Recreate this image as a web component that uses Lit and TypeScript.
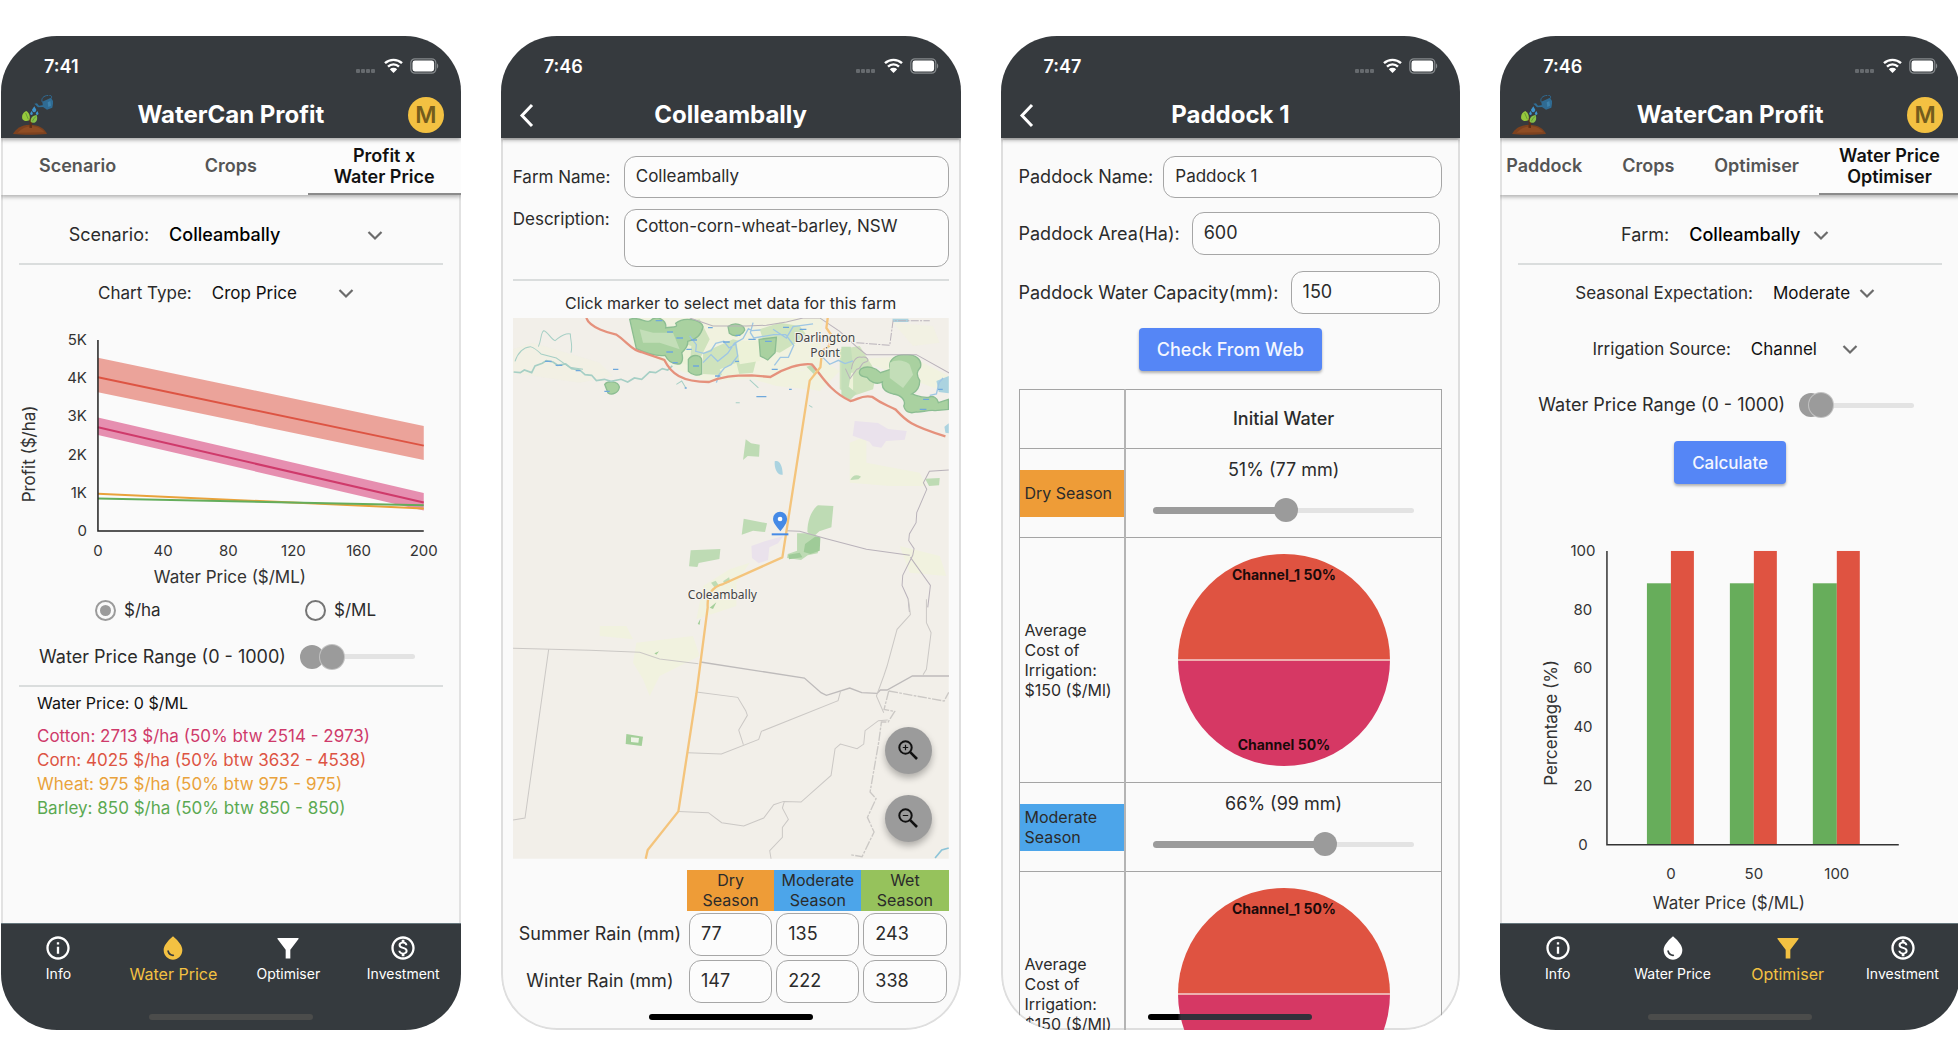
import { LitElement, html, svg, css, TemplateResult } from "lit";
import { customElement, property } from "lit/decorators.js";
import { classMap } from "lit/directives/class-map.js";

const base = css`
  *, *::before, *::after { box-sizing: border-box; }
  :host { display: block; font-family: Inter, "Liberation Sans", sans-serif; color: #2b2b2b; }
  svg { display: block; }
  button, input, select, textarea { font: inherit; color: inherit; margin: 0; }
  button { border: 0; background: none; padding: 0; cursor: pointer; }
  .body { padding: 0 18px; font-size: 17px; line-height: 20px; }
  .divider { border: 0; height: 2px; margin: 0; background: #dadddd; }
  .row { display: flex; align-items: center; justify-content: center; gap: 20px; height: 56px; }
  .action {
    display: block; height: 43px; padding: 0 18px; border-radius: 4px; background: #5586f6;
    color: #f3f6ff; font-weight: 500; box-shadow: 0 2px 3px rgba(0, 0, 0, .3);
  }
  .field {
    width: 100%; min-width: 0; height: 42px; padding: 0 11px 2px; background: #fcfcfc;
    border: 1px solid #a6a6a6; border-radius: 12px; outline: 0; resize: none; display: block;
  }
`;

/* ---------- drop-down ---------- */
@customElement("pick-row")
class PickRow extends LitElement {
  @property() label = "";
  @property() value = "";
  @property({ type: Boolean }) strong = false;
  @property({ type: Number }) room = 150;
  static styles = [base, css`
    .pick { display: grid; grid-template-columns: 1fr 24px 6px; align-items: center; }
    .pick select {
      grid-area: 1 / 1 / 2 / 4; width: 100%; height: 32px; appearance: none; border: 0; outline: 0;
      background: transparent; padding: 0; color: #111;
    }
    .pick svg { grid-area: 1 / 2 / 2 / 3; pointer-events: none; }
    .row { font-size: 17px; }
    .strong { font-size: 18px; }
    .strong select { font-weight: 500; color: #000; }
  `];
  render() {
    return html`<div class=${classMap({ row: true, strong: this.strong })}>
      <label for="s">${this.label}</label>
      <div class="pick" style="width:${this.room}px">
        <select id="s"><option>${this.value}</option></select>
        <svg width="24" height="24" viewBox="0 0 24 24" fill="none" stroke="#6b6b6b" stroke-width="2.200"><path d="M5.500 9 12 15.500 18.500 9"/></svg>
      </div>
    </div>`;
  }
}

/* ---------- sliders ---------- */
@customElement("value-slider")
class ValueSlider extends LitElement {
  @property() label = "";
  @property({ type: Number }) max = 100;
  @property({ type: Number }) value = 0;
  @property({ type: Number }) from = -1;
  static styles = [base, css`
    .slider { display: grid; align-items: center; height: 24px; }
    .slider > * { grid-area: 1 / 1; min-width: 0; }
    .rail { height: 5px; border-radius: 3px; margin: 0 12px; background: #e3e3e3; }
    .track { margin: 0 12px; }
    .fill { height: 7px; border-radius: 4px; background: #9b9b9b; }
    input { width: 100%; height: 24px; appearance: none; background: transparent; pointer-events: none; outline: 0; }
    input::-webkit-slider-thumb {
      appearance: none; width: 24px; height: 24px; border-radius: 50%; background: #9b9b9b; pointer-events: auto;
    }
    .upper::-webkit-slider-thumb { box-shadow: 0 0 0 1px #c2c2c2; }
  `];
  render() {
    const two = this.from >= 0;
    const pct = (this.value / this.max) * 100;
    return html`<div class="slider">
      <div class="rail"></div>
      <div class="track"><div class="fill" style="width:${pct}%"></div></div>
      ${two ? html`<input type="range" aria-label="${this.label}, lowest" min="0" max=${this.max} .value=${String(this.from)}>` : ""}
      <input class=${two ? "upper" : ""} type="range" aria-label=${this.label} min="0" max=${this.max} .value=${String(this.value)}>
    </div>`;
  }
}

@customElement("price-range")
class PriceRange extends LitElement {
  @property({ type: Number }) value = 0;
  static styles = [base, css`
    .row { gap: 14px; justify-content: flex-start; padding-left: 20px; font-size: 18px; white-space: nowrap; }
    value-slider { width: 127px; }
  `];
  render() {
    return html`<div class="row"><span>Water Price Range (0 - 1000)</span>
      <value-slider label="Water price" max="1000" from="0" .value=${this.value}></value-slider></div>`;
  }
}

/* ---------- phone frame ---------- */
const backIcon = svg`<path d="M15 4 5 14.500 15 25" fill="none" stroke="#fff" stroke-width="3"/>`;

const plantLogo = html`<svg width="40" height="40" viewBox="0 0 120 120" aria-hidden="true">
  <path d="M0 117c8-16 24-27 50-28 28 0 46 12 52 28-30 3-76 3-102 0z" fill="#7d421f"/>
  <path d="M14 113c12-12 24-18 40-19 20 0 32 8 40 18z" fill="#8f4d24"/>
  <path d="M49 98c2-12 1-20-3-30l6 2 5 8 4-4c-4 9-5 16-4 25z" fill="#5b2f1a"/>
  <path d="M28 72c-3-12 3-20 12-24 9 6 13 16 9 28-9 4-17 2-21-4z" fill="#97c93d"/>
  <path d="M53 80c-1-12 6-18 18-20 3 10 2 17-4 22-5 3-11 1-14-2z" fill="#86c04a"/>
  <path d="M38 54c3 7 5 12 8 19M69 64c-5 5-8 9-11 15" stroke="#4e8a2c" stroke-width="2" fill="none"/>
  <path d="M64 26l8-1 6 7 14-2 1 6-18 1z" fill="#2f6e96"/>
  <path d="M88 20l26-12 7 12-3 18-16 6-12-8z" fill="#2f6b93"/>
  <path d="M88 22c-5-12 4-20 18-21M114 10c4-4 2-9-5-9" stroke="#2f6b93" stroke-width="3" fill="none"/>
  <path d="M104 22l8-4 2 14-8 4z" fill="#3d82ad"/>
  <g fill="#3f93cc"><path d="M64 34l5 9a6 6 0 1 1-11 0z"/><path d="M56 48l3 6a4 4 0 1 1-7 0z"/><path d="M73 48l3 6a4 4 0 1 1-7 0z"/></g>
</svg>`;

@customElement("phone-head")
class PhoneHead extends LitElement {
  @property() time = "";
  @property() heading = "";
  @property({ type: Boolean }) back = false;
  static styles = [base, css`
    :host { position: relative; z-index: 2; background: #363a3e; color: #fff; box-shadow: 0 2px 4px rgba(0, 0, 0, .35); }
    .status { display: flex; align-items: center; justify-content: space-between; height: 56px; padding: 4px 22px 0 43px; font-size: 18px; font-weight: 600; }
    .signals { display: flex; align-items: center; gap: 7px; }
    .bar { display: grid; grid-template-columns: 60px 1fr 60px; align-items: center; height: 46px; }
    h1 { margin: 0; text-align: center; font-size: 24px; line-height: 30px; font-weight: 700; }
    .lead { padding-left: 12px; }
    .back { padding-left: 16px; }
    .me { justify-self: end; margin-right: 17px; width: 36px; height: 36px; border-radius: 50%; background: #f3c142; color: #745c1c; font-size: 23px; font-weight: 600; line-height: 36px; }
  `];
  render() {
    return html`
      <div class="status"><span>${this.time}</span>
        <span class="signals">
          <svg width="22" height="16" viewBox="0 0 22 16" fill="#666a6e"><rect x="1" y="11" width="4" height="4" rx="1"/><rect x="6" y="11" width="4" height="4" rx="1"/><rect x="11" y="11" width="4" height="4" rx="1"/><rect x="16" y="11" width="4" height="4" rx="1"/></svg>
          <svg width="19" height="16" viewBox="0 0 19 16"><path d="M1 5.200a12.400 12.400 0 0 1 17 0M4 8.600a8 8 0 0 1 11 0" fill="none" stroke="#fff" stroke-width="2.400"/><path d="M5.800 11.200a5.400 5.400 0 0 1 7.400 0L9.500 15z" fill="#fff"/></svg>
          <svg width="29" height="16" viewBox="0 0 29 16"><rect x=".8" y=".8" width="25" height="14.400" rx="4" fill="none" stroke="#85898c" stroke-width="1.200"/><rect x="2.500" y="2.500" width="21.600" height="11" rx="2.400" fill="#fff"/><path d="M27 5.500c1.600.6 1.600 4.400 0 5z" fill="#85898c"/></svg>
        </span>
      </div>
      <div class="bar">
        ${this.back
          ? html`<button class="back" aria-label="Back"><svg width="22" height="29" viewBox="0 0 22 29">${backIcon}</svg></button>`
          : html`<span class="lead">${plantLogo}</span>`}
        <h1>${this.heading}</h1>
        ${this.back ? "" : html`<button class="me" aria-label="Account">M</button>`}
      </div>`;
  }
}

@customElement("tab-strip")
class TabStrip extends LitElement {
  @property({ attribute: false }) tabs: string[] = [];
  @property({ type: Boolean }) scrolls = false;
  static styles = [base, css`
    :host { position: relative; z-index: 1; background: #fcfcfc; box-shadow: 0 2px 4px rgba(0, 0, 0, .3), inset 2px 0 #e2e2e2; }
    .tabs { display: flex; height: 57px; overflow: hidden; }
    .tabs button { flex: 1; font-size: 18px; line-height: 21px; font-weight: 600; color: #555; white-space: pre-line; text-align: center; border-bottom: 2px solid transparent; }
    .tabs .on { color: #111; border-color: #8b8b8b; }
    .scrolls { justify-content: flex-end; }
    .scrolls button { flex: none; padding: 0 20px; }
  `];
  render() {
    return html`<div role="tablist" class=${classMap({ tabs: true, scrolls: this.scrolls })}>
      ${this.tabs.map((t, i) => html`<button role="tab" class=${i === this.tabs.length - 1 ? "on" : ""}>${t}</button>`)}
    </div>`;
  }
}

const NAV: { name: string; icon: TemplateResult }[] = [
  { name: "Info", icon: svg`<path d="M11 7h2v2h-2zm0 4h2v6h-2zm1-9C6.480 2 2 6.480 2 12s4.480 10 10 10 10-4.480 10-10S17.520 2 12 2zm0 18c-4.410 0-8-3.590-8-8s3.590-8 8-8 8 3.590 8 8-3.590 8-8 8z"/>` },
  { name: "Water Price", icon: svg`<path d="M12 2c-5.330 4.550-8 8.480-8 11.800 0 4.980 3.800 8.200 8 8.200s8-3.220 8-8.200c0-3.320-2.670-7.250-8-11.800zM7.830 14c.37 0 .67.260.74.620.41 2.220 2.280 2.980 3.640 2.870.43-.02.79.32.79.75 0 .4-.32.73-.72.750-2.130.13-4.620-1.090-5.190-4.120A.75.75 0 0 1 7.830 14z"/>` },
  { name: "Optimiser", icon: svg`<path d="M3 3.500h18v.8l-7 9.200V21h-4v-7.500L3 4.300z"/>` },
  { name: "Investment", icon: svg`<path d="M12 2C6.480 2 2 6.480 2 12s4.480 10 10 10 10-4.480 10-10S17.520 2 12 2zm0 18c-4.410 0-8-3.590-8-8s3.590-8 8-8 8 3.590 8 8-3.590 8-8 8zm.31-8.860c-1.770-.45-2.340-.94-2.340-1.670 0-.84.79-1.430 2.100-1.430 1.380 0 1.900.66 1.940 1.640h1.710c-.05-1.340-.87-2.570-2.490-2.970V5H10.900v1.690c-1.510.32-2.720 1.300-2.720 2.810 0 1.790 1.490 2.690 3.660 3.210 1.950.46 2.340 1.150 2.340 1.870 0 .53-.39 1.390-2.100 1.390-1.600 0-2.230-.72-2.320-1.640H8.040c.1 1.700 1.360 2.660 2.860 2.970V19h2.340v-1.670c1.520-.29 2.720-1.160 2.730-2.770-.01-2.200-1.900-2.960-3.660-3.420z"/>` },
];

@customElement("nav-foot")
class NavFoot extends LitElement {
  @property() current = "";
  static styles = [base, css`
    :host { background: #353a3e; color: #fff; border-top: 1px solid #66767c; }
    nav { display: grid; grid-template-columns: repeat(4, 1fr); height: 106px; padding-top: 10px; }
    a { display: grid; justify-items: center; align-content: start; gap: 2px; color: inherit; text-decoration: none; font-size: 14px; line-height: 20px; white-space: nowrap; }
    svg { fill: currentColor; }
    .on { color: #f3c142; font-size: 16px; }
  `];
  render() {
    return html`<nav>${NAV.map((n) => html`<a href="#" class=${n.name === this.current ? "on" : ""}>
      <svg width="28" height="28" viewBox="0 0 24 24">${n.icon}</svg>${n.name}</a>`)}</nav>`;
  }
}

/* ---------- screen: profit against water price ---------- */
const CROPS = [
  { name: "Wheat", color: "#e9a23b", mid: [975, 584], low: [975, 584], high: [975, 584] },
  { name: "Corn", color: "#dd5443", band: "#eba39a", mid: [4025, 2233], low: [3632, 1858], high: [4538, 2748] },
  { name: "Cotton", color: "#cf3a6b", band: "#e68fb0", mid: [2713, 741], low: [2514, 531], high: [2973, 995] },
  { name: "Barley", color: "#64ad5b", mid: [850, 672], low: [850, 672], high: [850, 672] },
];

@customElement("profit-screen")
class ProfitScreen extends LitElement {
  static styles = [base, css`
    .body { padding-top: 12px; }
    .chart { width: 100%; font-size: 15px; fill: #333; }
    .chart .title { font-size: 17px; }
    .inset { margin: 0 -18px; }
    .radios { display: grid; grid-template-columns: 210px 1fr; height: 37px; align-items: center; padding-left: 76px; }
    .radios label { display: flex; align-items: center; gap: 8px; }
    .radios input { appearance: none; width: 21px; height: 21px; border: 2px solid #757575; border-radius: 50%; padding: 3px; background: #fafafa content-box; }
    .radios input:checked { border-color: #9b9b9b; background-color: #9b9b9b; }
    .result { padding: 6px 18px; color: #111; font-size: 16px; }
    ul { list-style: none; margin: 5px 0 0; padding: 0 18px; line-height: 24px; font-size: 17px; white-space: nowrap; }
    .cotton { color: #cf3a6b; } .corn { color: #dd5443; } .wheat { color: #e9a23b; } .barley { color: #5aa952; }
  `];
  render() {
    const x0 = 97, x1 = 423, y = (v: number) => 210 - v * 0.0382;
    const listed = ["Cotton", "Corn", "Wheat", "Barley"].map((n) => CROPS.find((c) => c.name === n)!);
    return html`<div class="body">
      <pick-row strong label="Scenario:" value="Colleambally" room="224"></pick-row>
      <hr class="divider">
      <pick-row label="Chart Type:" value="Crop Price" room="152"></pick-row>
      <div class="inset"><svg class="chart" viewBox="0 0 460 271" role="img" aria-label="Profit by water price">
        ${CROPS.map((c) => c.band ? svg`<path fill=${c.band} d="M${x0} ${y(c.high[0])}L${x1} ${y(c.high[1])}V${y(c.low[1])}L${x0} ${y(c.low[0])}z"/>` : "")}
        ${CROPS.map((c) => svg`<path stroke=${c.color} stroke-width="2" d="M${x0} ${y(c.mid[0])}L${x1} ${y(c.mid[1])}"/>`)}
        <path d="M97 19V210H423" fill="none" stroke="#222" stroke-width="1.500"/>
        ${[0, 1, 2, 3, 4, 5].map((k) => svg`<text x="86" y=${y(k * 1000) + 5} text-anchor="end">${k ? k + "K" : "0"}</text>`)}
        ${[0, 40, 80, 120, 160, 200].map((v) => svg`<text x=${x0 + v * 1.63} y="235" text-anchor="middle">${v}</text>`)}
        <text class="title" x="229" y="262" text-anchor="middle">Water Price ($/ML)</text>
        <text class="title" transform="translate(34 133) rotate(-90)" text-anchor="middle">Profit ($/ha)</text>
      </svg></div>
      <div class="radios">
        <label><input type="radio" name="unit" checked>$/ha</label>
        <label><input type="radio" name="unit">$/ML</label>
      </div>
      <price-range .value=${200}></price-range>
      <hr class="divider">
      <div class="result">Water Price: 0 $/ML</div>
      <ul>${listed.map((c) => html`<li class=${c.name.toLowerCase()}>${c.name}: ${c.mid[0]} $/ha (50% btw ${c.low[0]} - ${c.high[0]})</li>`)}</ul>
    </div>`;
  }
}

/* ---------- screen: farm ---------- */
const farmMap = html`<svg class="map" viewBox="70 26 1307 1622" preserveAspectRatio="xMidYMid slice" role="img" aria-label="Map of Coleambally and Darlington Point">
  <rect x="70" y="26" width="1307" height="1622" fill="#f2efe9"/>
  <g fill="#f1f2df">
    <path d="M640 26H1000l-10 120 60 40-60 60-40-10V180l-110 25-190 10-90-35-130-70L420 26zM1100 150l160-10 117 60V250l-60-20-80-30z"/>
    <path d="M790 210l170-30-10 60-90-10zM1080 400l50-20 0 80 160 30 20 40-110 0-120-10zM640 830l80-50 60-20-40 60 0 70-120 40zM330 950h80l20 40-100-10zM440 1000l170-20 20 60-120 60-30 60-20-50-30-50zM1230 710l120 30 20 60-110-10z"/>
    <path d="M70 120l60-20 200 60 40 40-100 20-200-30z" opacity=".5"/>
    <path d="M1210 40l120 10 20 50-80 10z" opacity=".6"/>
  </g>
  <g fill="#cfe3bd">
    <path d="M560 40l70-10 30 60-30 60-60 10zM640 130l90-40 80 20-20 80-90 8-60-4zM810 60l60-20 50 60-50 30-40-10zM1050 120l60-10 50 80-10 50-60 20-40-20z"/>
    <path d="M870 40l60 10 30 40-50 10z"/>
  </g>
  <g fill="#edf2d8"><path d="M740 95h70v60l-60 10zM575 100l30 10-5 60-25-10zM690 180l50-20 10 40-50 4zM1070 190l20 0 0 60-20 0z"/></g>
  <g fill="#a9d1a0" stroke="#8cbd92" stroke-width="4">
    <path d="M420 30c30-10 50 14 62 4 20-20 50 0 46 22 20-4 40 0 30-14 26-22 76-10 82 10-6 30-26 40-46 44 2 16-10 26-18 34 6 20 0 34-8 34-22 2-34-10-42-26-26 4-60-8-86-20z"/>
    <path d="M715 52c20-16 48-6 50 10-10 20-32 22-46 10zM808 90l52-6-4 46-22 22-22-12zM596 150c16-20 40-10 40 4v40c-12 6-28 4-40-8z"/>
    <path d="M1112 180c20-14 46-4 60 10l30-10c-10-30 20-46 46-44 30-2 50 16 44 38-10 12-14 20-2 40 0 20-12 34-24 40 20 6 30 12 50 10 14-6 26 0 30 16l30-10v30l-40 4c-20-4-40 6-56 4-20 6-34 0-38-18 8-16-8-34-32-36-20-6-36-14-32-36-20 10-38-2-46-14-20-2-28-10-20-24z"/>
    <path d="M345 225c10-12 40-10 44 8-2 18-22 26-34 18z"/>
  </g>
  <g fill="#c3deb8"><path d="M1200 160c20-12 50-6 60 6l10 30-30 40-40-30z"/><path d="M450 60l40 10 60 0 20 50-60-20-50 0z"/><path d="M1055 112l28 0 6 50-12 70 24 20-20 20-26-14z"/></g>
  <g fill="#bedbb4">
    <path d="M768 390l16 12 26 4-2 36-34-2-14 12zM762 628l70 14-6 26-36-4-34 12zM603 723l89-4-3 30-62 12-4 12-25-2zM953 668c0-40 16-70 32-80l46 2-6 64-36 12-18 16zM922 672l38 0 30 10-6 50-30 6-20 14-42-6 2-12 28-10zM1306 508l44-2-2 22-30 2zM1082 512c6-14 18-18 32-10l-8 8zM950 172l16-4 12 16-6 10zM664 820l14-6 8 12-12 8zM700 816l18-12 4 14-16 6z"/>
  </g>
  <path d="M946 704l30-22 16 2-2 40-28 10-20-6zM896 736l34-6 8 14-40 6z" fill="#9fcb98"/>
  <g fill="#eae2ec"><path d="M1095 335l70 6 30 18 56 6-6 26-56 4-14 20-26-4-10-14-50-18zM785 710l40-14 56-16-16 22-26 12-4 38-28 10-20-16z"/></g>
  <path d="M855 456c14-6 24 14 24 40-14 4-26-16-24-40zM1364 352l13-10v30l-10-2zM1340 215l37-15v52l-30-4zM1208 28h48v10h-46z" fill="#abd3e0"/>
  <g fill="none" stroke="#a6cfc5" stroke-width="5">
    <path d="M72 188l20 2 12-8 22 8 10-20 22-8 12-8 20 4 14 10 24-4 18 14 24 4 16 14 20 2 14 16 24-4 20 6 30-6 20 8 20-12 22 4 24-22 18 2 20-12 16 4 14-12"/>
    <path d="M76 156c10-30 26-42 46-44 12 4 24 14 32 22l46 12 40 28 40 6M146 112c10-20 6-40 16-48 10 0 22 26 34 30 12-8 26-24 46-20 0 20 8 34 2 56" stroke-width="3"/>
    <path d="M560 225l16-10 12 20M780 212l26 24M738 280l12 0M958 288l10 6" stroke-width="3"/>
  </g>
  <g fill="none" stroke="#9ec6e4" stroke-width="4">
    <path d="M600 80l20 26-2 20 24 6 22-8 14-22 24-6 16 20 20-12 6 36-20 26-20 10-16 20-8 24M640 160l24-24 20 20 30-24 20-30 26-14 16-30 10 6 26-2M790 40l-8 30 10 16 60-10 36 0 24 32-16 36-24 0-18 24M850 60l40 26 20-34 60-8"/>
    <path d="M1000 145l20 20 26-12 20 10 24-8M1320 258l20-4 8-34 12-14"/>
  </g>
  <path d="M498 34h20M532 68h18M560 86h20M604 92h18M590 120h16M530 128h20M548 160h16M610 170h18M655 55h14M700 98h20M738 78h14M776 90h22M826 96h20M880 54h18M930 60h20M936 92h18M846 180h18M736 156h12M676 200h16M166 156h20M198 168h20M258 184h14M370 180h16M344 246h16M800 262h30M898 240h8M585 236h6M1300 270h18M1290 300h20M1345 240h14" stroke="#6fa8dc" stroke-width="4"/>
  <g fill="none" stroke="#b9b2ba" stroke-width="3">
    <path d="M600 26l70 24h100l60-2 60-10 50-12h50l60 40 50 46 30 24 150 0 100 56"/>
    <path d="M1085 180c4-30 18-40 30-36 20-4 26 12 12 14-16 2-10 22-26 22l-20 28-14-30"/>
    <path d="M1100 100l100 8 10-74h110" stroke-dasharray="24 4 6 4"/>
    <path d="M890 664l40 2 80 22 120 32 130 18M1377 482l-58 4-18 34 10 20-30 70-2 30-20 34-2 20 16 24-4 20-30 60-2 30 18 40 4 40M1262 744l60 84-8 66"/>
  </g>
  <g transform="translate(0 870)" fill="none" stroke="#cbc8c5" stroke-width="4">
    <path d="M632 188l312 48 50 44 16 8 70-22 36 14 46 2 10-10h20l76-42h110" stroke="#bebbbb"/>
    <path d="M70 147l230 6 150 6 60 20 116 14M177 150L106 656l-36 6M620 278l124 16 24 40 5 14-26 44 14 44M595 460l100 4 112-44 8-24 230-92 8-30M566 636l90 4 40 30 66 10 60-24 30-40 30-10 52 2 90-80 12-80 16-14 50 14 20-14 4-40 40-30 28-2M884 606l-6 20 18 34-18 24 0 30-38 40 4 24M1256 0l6 46-40 44-30 110-10 30-22 60 22 50M1310 0v70l14 30-14 110-10 16" stroke-width="3"/>
    <path d="M1197 275l166 30 14-26M1197 275l-14 55 32 6-20 32-20 0-8 60-26 150 18 20-26 56 20 44-36 74-34-6" stroke-dasharray="28 4 8 4"/>
    <path d="M1336 776l20-24 21-6" stroke="#8cc4d8" stroke-width="5"/>
  </g>
  <path d="M410 1274l50 8-4 28-48-6z" fill="#a4cf9a"/><path d="M424 1284l24 2-2 14-22-2z" fill="#eef3e6"/>
  <path d="M494 1032l14-6-8 10zM624 944l8-16-2 18zM660 895l20-16-10 20z" fill="#a4cf9a"/>
  <path d="M290 26c10 30 70 46 90 50 30 20 50 50 74 52l70 24c20 40 50 66 134 66 40-16 70-20 128-20l56 5c40-26 90-42 124-38 24 24 50 80 116 110 20-2 34-20 66-12 30 22 40 22 70 38 30 32 40 46 149 80" fill="none" stroke="#e5917c" stroke-width="7"/>
  <path d="M1014 26l-4 30 14 20-6 34-20 14-4 30-2 20-32 40L878 744l-178 80c-40 10-48 40-46 70l-34 260-54 352-92 116-6 26" fill="none" stroke="#f4c47c" stroke-width="7" stroke-linejoin="round"/>
  <path d="M872 666c-14-18-22-26-22-38a21 21 0 0 1 42 0c0 12-6 20-20 38z" fill="#468ae6"/><circle cx="871" cy="629" r="7" fill="#fff"/>
  <path d="M846 675h50" stroke="#468ae6" stroke-width="6"/>
  <g class="place" text-anchor="middle"><text x="1006" y="97">Darlington</text><text x="1006" y="142">Point</text><text x="698" y="870">Coleambally</text></g>
</svg>`;

@customElement("farm-screen")
class FarmScreen extends LitElement {
  static styles = [base, css`
    .body { padding: 18px 12px 0; display: flex; flex-direction: column; }
    .form { display: grid; grid-template-columns: 102px 1fr; column-gap: 9px; row-gap: 11px; align-items: center; }
    .form label { font-size: 17px; white-space: nowrap; }
    .form .top { align-self: start; }
    .area { height: 58px; padding-top: 6px; }
    .divider { margin-top: 12px; }
    .hint { margin: 0; padding: 12px 0 5px; text-align: center; font-size: 16px; }
    .mapbox { position: relative; }
    .map { width: 100%; aspect-ratio: 436 / 541; }
    .place text { font: 36px "Noto Sans", sans-serif; fill: #444; stroke: #f6f4ef; stroke-width: 6px; paint-order: stroke; }
    .zoom { position: absolute; right: 17px; width: 47px; height: 47px; border-radius: 50%; background: #9b9b9b; display: grid; place-items: center; box-shadow: 0 4px 7px rgba(0, 0, 0, .28); }
    .in { bottom: 85px; } .out { bottom: 17px; }
    table { margin-top: 11px; border-collapse: collapse; table-layout: fixed; width: 100%; }
    th { font-weight: 400; text-align: center; padding: 0; white-space: nowrap; }
    tbody th { font-size: 18px; }
    .lbl { width: 40%; }
    thead th { font-size: 16px; height: 41px; }
    .dry { background: #ee9c37; } .mod { background: #4ca5ea; } .wet { background: #96c25c; }
    td { padding: 2px; height: 47px; }
    td .field { height: 43px; font-size: 18px; }
  `];
  render() {
    const rows: [string, number[]][] = [["Summer Rain (mm)", [77, 135, 243]], ["Winter Rain (mm)", [147, 222, 338]]];
    const lens = (plus: boolean) => html`<svg width="24" height="24" viewBox="0 0 24 24" fill="none" stroke="#111" stroke-width="2"><circle cx="9.500" cy="9.500" r="6.200"/><path d="M14.200 14.200 21 21" stroke-width="2.600"/><path d=${plus ? "M6.800 9.500h5.400M9.500 6.800v5.400" : "M6.800 9.500h5.400"} stroke-width="1.200"/></svg>`;
    return html`<div class="body">
      <div class="form">
        <label for="name">Farm Name:</label><input id="name" class="field" value="Colleambally">
        <label class="top" for="desc">Description:</label><textarea id="desc" class="field area">Cotton-corn-wheat-barley, NSW</textarea>
      </div>
      <hr class="divider">
      <p class="hint">Click marker to select met data for this farm</p>
      <div class="mapbox">${farmMap}
        <button class="zoom in" aria-label="Zoom in">${lens(true)}</button>
        <button class="zoom out" aria-label="Zoom out">${lens(false)}</button>
      </div>
      <table>
        <thead><tr><th class="lbl"></th><th class="dry">Dry<br>Season</th><th class="mod">Moderate<br>Season</th><th class="wet">Wet<br>Season</th></tr></thead>
        <tbody>${rows.map(([n, v]) => html`<tr><th scope="row">${n}</th>${v.map((x) => html`<td><input class="field" aria-label=${n} value=${x}></td>`)}</tr>`)}</tbody>
      </table>
    </div>`;
  }
}

/* ---------- screen: paddock ---------- */
@customElement("paddock-screen")
class PaddockScreen extends LitElement {
  static styles = [base, css`
    .body { padding: 18px 18px 0; }
    .line { display: flex; align-items: center; gap: 10px; margin-bottom: 14px; }
    .line label { white-space: nowrap; font-size: 18px; }
    .number { padding-right: 2px; gap: 12px; }
    .number .field { height: 43px; font-size: 18px; }
    .number + .number { margin-top: 16px; }
    .action { margin: 0 auto; font-size: 18px; }
    table { width: 100%; border-collapse: collapse; table-layout: fixed; margin-top: 18px; }
    th, td { border: 1px solid #a4a4a4; padding: 0; font-weight: 400; text-align: center; font-size: 18px; }
    thead th { height: 59px; font-weight: 500; }
    .side { width: 106px; text-align: left; font-size: 16px; border-right: 2px solid #b4b4b4; }
    .head td, .head th { height: 89px; }
    .head td { padding-bottom: 4px; }
    .tag { display: flex; align-items: center; height: 47px; padding: 0 5px; }
    .dry { background: #ee9c37; } .mod { background: #4ca5ea; }
    .note { padding: 0 5px; }
    .pct { display: block; padding-bottom: 18px; }
    value-slider { margin: 0 15px; }
    .cost td, .cost th { height: 245px; }
    .pie { margin: 0 auto; font-size: 14px; font-weight: 700; fill: #1a0a0a; }
  `];
  render() {
    const seasons = [
      { name: "Dry Season", cls: "dry", pct: 51, mm: 77 },
      { name: "Moderate Season", cls: "mod", pct: 66, mm: 99 },
    ];
    return html`<div class="body">
      <div class="line"><label for="n">Paddock Name:</label><input id="n" class="field" value="Paddock 1"></div>
      <div class="line number"><label for="a">Paddock Area(Ha):</label><input id="a" class="field" value="600"></div>
      <div class="line number"><label for="c">Paddock Water Capacity(mm):</label><input id="c" class="field" value="150"></div>
      <button class="action">Check From Web</button>
      <table>
        <thead><tr><th class="side"></th><th>Initial Water</th></tr></thead>
        <tbody>${seasons.map((s) => html`
          <tr class="head"><th class="side" scope="row"><div class="tag ${s.cls}">${s.name}</div></th>
            <td><span class="pct">${s.pct}% (${s.mm} mm)</span><value-slider label="${s.name} initial water" .value=${s.pct}></value-slider></td></tr>
          <tr class="cost"><th class="side" scope="row"><div class="note">Average Cost of Irrigation: $150 ($/Ml)</div></th>
            <td><svg class="pie" width="212" height="212" viewBox="0 0 212 212" text-anchor="middle">
              <path d="M0 106a106 106 0 0 1 212 0z" fill="#df5341"/><path d="M0 106a106 106 0 0 0 212 0z" fill="#d63864"/>
              <path d="M0 106h212" stroke="#eeb0ae" stroke-width="2"/>
              <text x="106" y="26">Channel_1 50%</text><text x="106" y="196">Channel 50%</text>
            </svg></td></tr>`)}</tbody>
      </table>
    </div>`;
  }
}

/* ---------- screen: optimiser ---------- */
@customElement("optimiser-screen")
class OptimiserScreen extends LitElement {
  static styles = [base, css`
    .body { padding-top: 12px; }
    .action { margin: 8px auto 0; }
    .inset { margin: 0 -18px; }
    .chart { width: 100%; font-size: 15px; fill: #333; }
    .chart .title { font-size: 17px; }
  `];
  render() {
    const y = (v: number) => 361 - v * 2.94;
    return html`<div class="body">
      <pick-row strong label="Farm:" value="Colleambally" room="150"></pick-row>
      <hr class="divider">
      <pick-row label="Seasonal Expectation:" value="Moderate" room="112"></pick-row>
      <pick-row label="Irrigation Source:" value="Channel" room="117"></pick-row>
      <price-range .value=${100}></price-range>
      <button class="action">Calculate</button>
      <div class="inset"><svg class="chart" viewBox="0 0 460 439" text-anchor="middle" role="img" aria-label="Percentage by water price">
        ${[0, 50, 100].map((v, i) => svg`
          <rect x=${147 + i * 83} y=${y(89)} width="24" height=${y(0) - y(89)} fill="#67ad5b"/>
          <rect x=${171 + i * 83} y=${y(100)} width="23" height=${y(0) - y(100)} fill="#df5341"/>
          <text x=${171 + i * 83} y="395">${v}</text>`)}
        <path d="M107 67V361H399" fill="none" stroke="#333" stroke-width="1.500"/>
        ${[0, 20, 40, 60, 80, 100].map((v) => svg`<text x="83" y=${y(v) + 5}>${v}</text>`)}
        <text class="title" x="229" y="425">Water Price ($/ML)</text>
        <text class="title" transform="translate(57 239) rotate(-90)">Percentage (%)</text>
      </svg></div>
    </div>`;
  }
}

/* ---------- page ---------- */
@customElement("app-root")
class AppRoot extends LitElement {
  static styles = css`
    :host { display: block; background: #fff; overflow: hidden; }
    .phones {
      display: grid; grid-template-columns: repeat(4, minmax(0, 1fr)); grid-template-rows: minmax(0, 1fr); gap: 40px;
      height: 100vh; box-sizing: border-box; padding: 36px 0 32px 1px; margin-right: -2px;
    }
    .phone { position: relative; display: flex; flex-direction: column; overflow: hidden; border-radius: 56px; background: #fafafa; }
    .screen { flex: 1; min-height: 0; overflow: hidden; background: #fafafa; box-shadow: inset 2px 0 #e2e2e2, inset -2px 0 #e2e2e2; }
    .open { border-radius: 0 0 56px 56px; box-shadow: inset 0 0 0 2px #dedede; }
    .home { position: absolute; z-index: 3; left: 50%; bottom: 10px; width: 164px; height: 6px; margin-left: -82px; border-radius: 3px; background: #4b4c4b; }
    .black { background: #000; }
    .glass { background: linear-gradient(90deg, #000 18%, #33303a 20%); }
  `;
  render() {
    return html`<main class="phones">
      <section class="phone">
        <phone-head time="7:41" heading="WaterCan Profit"></phone-head>
        <tab-strip .tabs=${["Scenario", "Crops", "Profit x\nWater Price"]}></tab-strip>
        <div class="screen"><profit-screen></profit-screen></div>
        <nav-foot current="Water Price"></nav-foot>
        <span class="home"></span>
      </section>
      <section class="phone">
        <phone-head back time="7:46" heading="Colleambally"></phone-head>
        <div class="screen open"><farm-screen></farm-screen></div>
        <span class="home black"></span>
      </section>
      <section class="phone">
        <phone-head back time="7:47" heading="Paddock 1"></phone-head>
        <div class="screen open"><paddock-screen></paddock-screen></div>
        <span class="home glass"></span>
      </section>
      <section class="phone">
        <phone-head time="7:46" heading="WaterCan Profit"></phone-head>
        <tab-strip scrolls .tabs=${["Paddock", "Crops", "Optimiser", "Water Price\nOptimiser"]}></tab-strip>
        <div class="screen"><optimiser-screen></optimiser-screen></div>
        <nav-foot current="Optimiser"></nav-foot>
        <span class="home"></span>
      </section>
    </main>`;
  }
}
